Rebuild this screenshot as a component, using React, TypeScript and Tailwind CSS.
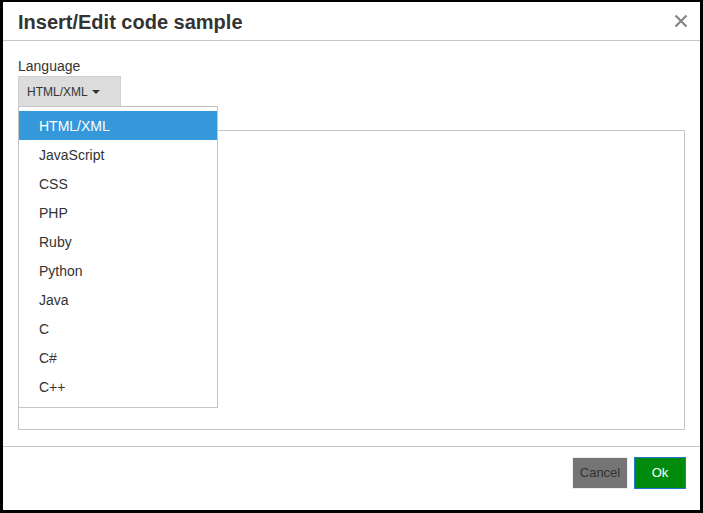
const languages = [
  "HTML/XML",
  "JavaScript",
  "CSS",
  "PHP",
  "Ruby",
  "Python",
  "Java",
  "C",
  "C#",
  "C++",
];

export default function App() {
  const selected = "HTML/XML";

  return (
    <div
      className="w-[703px] h-[513px] bg-black border-l-[3px] border-r-[3px] border-t-2 border-b-[3px] border-black"
      style={{ fontFamily: '"Liberation Sans", Arial, sans-serif' }}
    >
      <div className="bg-white w-full h-full flex flex-col">
        {/* Header */}
        <div className="h-[39px] flex items-center justify-between pl-[15px] pr-[12px] border-b border-[#c5c5c5] shrink-0">
          <h1 className="text-[20px] font-bold text-[#333333] leading-none mt-[1px]">
            Insert/Edit code sample
          </h1>
          <button className="text-[#858585] leading-none" aria-label="Close">
            <svg width="14" height="14" viewBox="0 0 14 14">
              <path
                d="M1.5 1.5 L12.5 12.5 M12.5 1.5 L1.5 12.5"
                stroke="#858585"
                strokeWidth="2.2"
              />
            </svg>
          </button>
        </div>

        {/* Body */}
        <div className="flex-1 px-[15px] pt-[16px] relative">
          <label className="block text-[14px] text-[#333333] leading-[18px]">
            Language
          </label>
          <div className="relative mt-[1px] w-[103px]">
            <button className="w-[103px] h-[30px] bg-[#dcdcdc] border border-[#d0d0d0] border-b-0 flex items-center pl-[8px] text-[12px] text-[#333333]">
              {selected}
              <svg width="8" height="4" viewBox="0 0 8 4" className="ml-[4px]">
                <path d="M0 0 L8 0 L4 4 Z" fill="#333333" />
              </svg>
            </button>
            {/* Dropdown menu */}
            <div className="absolute left-0 top-[30px] w-[200px] bg-white border border-[#c5c5c5] pt-[4px] pb-[6px] z-10">
              {languages.map((lang) => (
                <div
                  key={lang}
                  className={`h-[29px] flex items-center pl-[20px] pt-[2px] text-[14px] ${
                    lang === selected
                      ? "bg-[#3498db] text-white"
                      : "text-[#333333]"
                  }`}
                >
                  {lang}
                </div>
              ))}
            </div>
          </div>
          <textarea className="block mt-[24px] w-[667px] h-[300px] border border-[#c5c5c5] resize-none outline-none" />
        </div>

        {/* Footer */}
        <div className="h-[64px] border-t border-[#c5c5c5] flex justify-end items-start pt-[10px] pr-[14px] gap-[6px] shrink-0">
          <button className="w-[56px] h-[32px] bg-[#757575] border border-[#eeeeee] text-[13px] text-[#333333]">
            Cancel
          </button>
          <button className="w-[52px] h-[32px] bg-[#008a0e] border border-[#2276d2] text-[13px] text-white">
            Ok
          </button>
        </div>
      </div>
    </div>
  );
}
